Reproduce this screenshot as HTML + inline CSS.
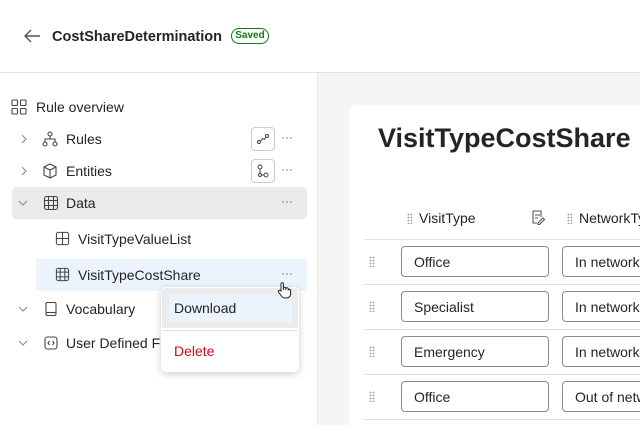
<!DOCTYPE html>
<html><head><style>
*{box-sizing:border-box;margin:0;padding:0}
body{width:640px;height:425px;overflow:hidden;background:#fff;font-family:"Liberation Sans",sans-serif;color:#242424;position:relative}
.a{position:absolute}
.t{font-size:14px;white-space:nowrap}
.inp{position:absolute;height:31px;border:1px solid #8a8a8a;border-radius:4px;background:#fff;font-size:14px;padding:7px 12px;white-space:nowrap;overflow:hidden}
.hl{position:absolute;height:1px;background:#e0e0e0}
.gd{position:absolute;width:6px;height:11px;background-image:radial-gradient(circle,#aaa 0.8px,transparent 1px);background-size:3px 3px}
</style></head><body>
<svg class="a" style="left:22px;top:28px" width="20" height="16" viewBox="0 0 20 16"><path d="M18 8H3M9 2L3 8l6 6" fill="none" stroke="#555" stroke-width="1.4"/></svg>
<div class="a" style="left:52px;top:29px;font-size:14.5px;font-weight:bold">CostShareDetermination</div>
<div class="a" style="left:231px;top:28px;height:16px;width:38px;border:1.3px solid #107c10;border-radius:8px;color:#107c10;font-size:10px;font-weight:bold;text-align:center;line-height:13px">Saved</div>
<div class="a" style="left:0;top:72px;width:640px;height:1px;background:#e0e0e0"></div>
<div class="a" style="left:317px;top:73px;width:323px;height:352px;background:#f5f5f5;border-left:1px solid #e6e6e6"></div>
<div class="a" style="left:349px;top:105px;width:300px;height:330px;background:#fff;border-radius:8px"></div>
<div class="a" style="left:378px;top:123px;font-size:27px;font-weight:bold">VisitTypeCostShare</div>
<div class="gd" style="left:407px;top:213px"></div>
<div class="a t" style="left:419px;top:210px">VisitType</div>
<svg class="a" style="left:531px;top:210px" width="14" height="15" viewBox="0 0 14 15"><path d="M2 1h8v6M2 1v12h4M4 5h5M4 8h3M7 13l5-5 1.5 1.5-5 5H7z" fill="none" stroke="#555" stroke-width="1.1"/></svg>
<div class="gd" style="left:567px;top:213px"></div>
<div class="a t" style="left:579px;top:210px">NetworkType</div>
<div class="hl" style="left:365px;top:239px;width:275px"></div>
<div class="hl" style="left:365px;top:284px;width:275px"></div>
<div class="hl" style="left:365px;top:329px;width:275px"></div>
<div class="hl" style="left:365px;top:374px;width:275px"></div>
<div class="hl" style="left:365px;top:419px;width:275px"></div>
<div class="gd" style="left:369px;top:256px"></div>
<div class="gd" style="left:369px;top:301px"></div>
<div class="gd" style="left:369px;top:346px"></div>
<div class="gd" style="left:369px;top:391px"></div>
<div class="inp" style="left:401px;top:246px;width:148px">Office</div>
<div class="inp" style="left:401px;top:291px;width:148px">Specialist</div>
<div class="inp" style="left:401px;top:336px;width:148px">Emergency</div>
<div class="inp" style="left:401px;top:381px;width:148px">Office</div>
<div class="inp" style="left:562px;top:246px;width:100px">In network</div>
<div class="inp" style="left:562px;top:291px;width:100px">In network</div>
<div class="inp" style="left:562px;top:336px;width:100px">In network</div>
<div class="inp" style="left:562px;top:381px;width:100px">Out of network</div>
<svg class="a" style="left:11px;top:99px" width="16" height="16" viewBox="0 0 16 16" fill="none" stroke="#444" stroke-width="1.1"><rect x="1" y="1" width="5.5" height="5.5" rx="1"/><rect x="9.5" y="1" width="5.5" height="5.5" rx="1"/><rect x="1" y="9.5" width="5.5" height="5.5" rx="1"/><rect x="9.5" y="9.5" width="5.5" height="5.5" rx="1"/></svg>
<div class="a t" style="left:36px;top:99px">Rule overview</div>
<svg class="a" style="left:20px;top:134px" width="8" height="10" viewBox="0 0 8 10"><path d="M2 1l4 4-4 4" fill="none" stroke="#888"/></svg>
<svg class="a" style="left:42px;top:131px" width="16" height="16" viewBox="0 0 16 16" fill="none" stroke="#444" stroke-width="1.1"><circle cx="8" cy="3" r="2"/><circle cx="3" cy="13" r="2"/><circle cx="13" cy="13" r="2"/><path d="M8 5v3M3 11V8h10v3"/></svg>
<div class="a t" style="left:66px;top:131px">Rules</div>
<div class="a" style="left:251px;top:127px;width:24px;height:24px;border:1px solid #ccc;border-radius:4px"></div>
<svg class="a" style="left:256px;top:132px" width="14" height="14" viewBox="0 0 14 14" fill="none" stroke="#444" stroke-width="1"><circle cx="3" cy="10" r="1.5"/><circle cx="11" cy="4" r="1.5"/><path d="M4.5 9.5l2-3 2 1 1-2"/></svg>
<div class="a" style="left:281px;top:130px;color:#666;font-size:12px">···</div>
<svg class="a" style="left:20px;top:166px" width="8" height="10" viewBox="0 0 8 10"><path d="M2 1l4 4-4 4" fill="none" stroke="#888"/></svg>
<svg class="a" style="left:42px;top:163px" width="16" height="16" viewBox="0 0 16 16" fill="none" stroke="#444" stroke-width="1.1"><path d="M8 1l6 3v8l-6 3-6-3V4z"/><path d="M2 4l6 3 6-3M8 7v8"/></svg>
<div class="a t" style="left:66px;top:163px">Entities</div>
<div class="a" style="left:251px;top:159px;width:24px;height:24px;border:1px solid #ccc;border-radius:4px"></div>
<svg class="a" style="left:256px;top:164px" width="14" height="14" viewBox="0 0 14 14" fill="none" stroke="#444" stroke-width="1"><circle cx="4" cy="3" r="2"/><circle cx="4" cy="11" r="1.5"/><circle cx="10" cy="11" r="2"/><path d="M4 5v4.5M5.5 11H8"/></svg>
<div class="a" style="left:281px;top:162px;color:#666;font-size:12px">···</div>
<div class="a" style="left:12px;top:187px;width:295px;height:32px;background:#ebebeb;border-radius:4px"></div>
<svg class="a" style="left:18px;top:199px" width="10" height="8" viewBox="0 0 10 8"><path d="M1 2l4 4 4-4" fill="none" stroke="#888"/></svg>
<svg class="a" style="left:43px;top:195px" width="16" height="16" viewBox="0 0 16 16" fill="none" stroke="#444" stroke-width="1.1"><rect x="1.5" y="1.5" width="13" height="13" rx="2"/><path d="M1.5 5.5h13M1.5 10.5h13M5.5 1.5v13M10.5 1.5v13"/></svg>
<div class="a t" style="left:66px;top:195px">Data</div>
<div class="a" style="left:281px;top:194px;color:#666;font-size:12px">···</div>
<svg class="a" style="left:55px;top:231px" width="15" height="15" viewBox="0 0 16 16" fill="none" stroke="#444" stroke-width="1.1"><rect x="1.5" y="1.5" width="13" height="13" rx="2"/><path d="M1.5 8h13M8 1.5v13"/></svg>
<div class="a t" style="left:78px;top:231px">VisitTypeValueList</div>
<div class="a" style="left:36px;top:259px;width:271px;height:32px;background:#ebf3fc"></div>
<svg class="a" style="left:55px;top:267px" width="15" height="15" viewBox="0 0 16 16" fill="none" stroke="#444" stroke-width="1.1"><rect x="1.5" y="1.5" width="13" height="13" rx="2"/><path d="M1.5 5.5h13M1.5 10.5h13M5.5 1.5v13M10.5 1.5v13"/></svg>
<div class="a t" style="left:78px;top:267px">VisitTypeCostShare</div>
<div class="a" style="left:281px;top:266px;color:#666;font-size:12px">···</div>
<svg class="a" style="left:18px;top:305px" width="10" height="8" viewBox="0 0 10 8"><path d="M1 2l4 4 4-4" fill="none" stroke="#888"/></svg>
<svg class="a" style="left:43px;top:301px" width="16" height="16" viewBox="0 0 16 16" fill="none" stroke="#444" stroke-width="1.1"><rect x="3" y="1.5" width="10" height="13" rx="1.5"/><path d="M3 11.5h10"/></svg>
<div class="a t" style="left:66px;top:301px">Vocabulary</div>
<svg class="a" style="left:18px;top:339px" width="10" height="8" viewBox="0 0 10 8"><path d="M1 2l4 4 4-4" fill="none" stroke="#888"/></svg>
<svg class="a" style="left:43px;top:335px" width="16" height="16" viewBox="0 0 16 16" fill="none" stroke="#444" stroke-width="1.1"><rect x="2" y="2" width="12" height="12" rx="2.5"/><path d="M6.5 6L5 8l1.5 2M9.5 6L11 8l-1.5 2"/></svg>
<div class="a t" style="left:66px;top:335px">User Defined Functions</div>
<div class="a" style="left:161px;top:287px;width:138px;height:85px;background:#fff;border-radius:5px;box-shadow:0 2px 8px rgba(0,0,0,.2)"></div>
<div class="a" style="left:162px;top:288px;width:136px;height:40px;background:#ebebeb;border-radius:4px 4px 0 0"></div>
<div class="a" style="left:169px;top:294px;width:123px;height:28px;background:#ebf3fc"></div>
<div class="a t" style="left:174px;top:300px">Download</div>
<div class="a" style="left:162px;top:330px;width:136px;height:1px;background:#e0e0e0"></div>
<div class="a t" style="left:174px;top:343px;color:#c50f1f">Delete</div>
<svg class="a" style="left:276px;top:281px" width="16" height="18" viewBox="0 0 16 18"><path d="M5 10V3a1.2 1.2 0 012.4 0v6V7.5a1.2 1.2 0 012.4 0V9 8a1.2 1.2 0 012.4 0v1.5a1.2 1.2 0 012.4 0V13c0 2.5-2 4-4.5 4H9c-2 0-3-1-4-2.5L2.5 11a1.2 1.2 0 012-1.3z" fill="#fff" stroke="#222" stroke-width="1"/></svg>
</body></html>
